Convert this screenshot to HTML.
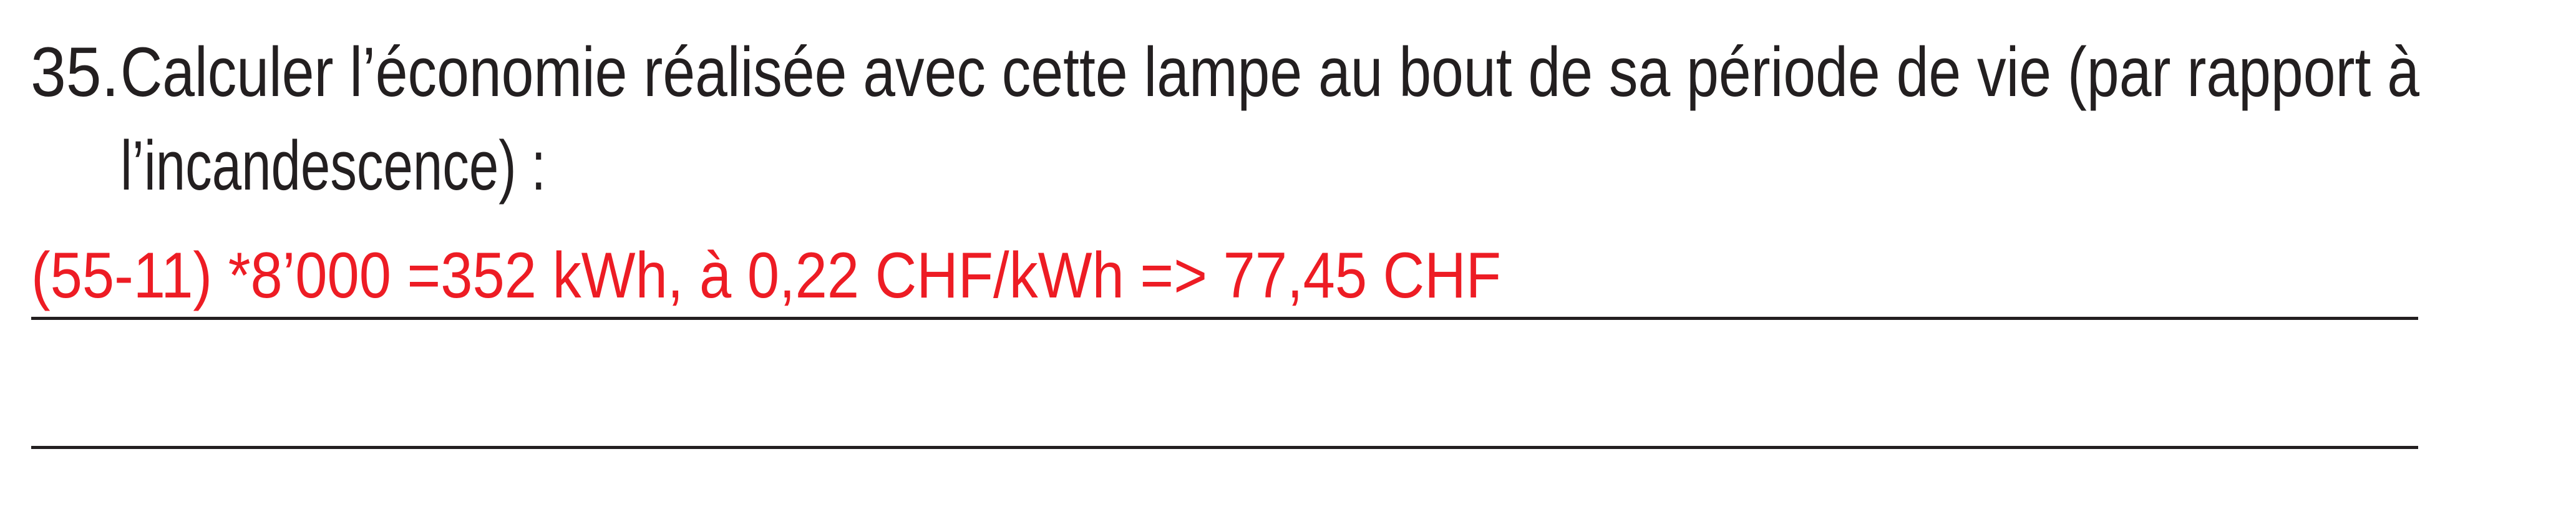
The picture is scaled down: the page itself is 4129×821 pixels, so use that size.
<!DOCTYPE html>
<html><head><meta charset="utf-8">
<style>
html,body{margin:0;padding:0;background:#fff;width:4129px;height:821px;overflow:hidden;position:relative}
.t{position:absolute;white-space:nowrap;font-family:"Liberation Sans Narrow","Liberation Sans",sans-serif;transform-origin:0 0;line-height:1}
.k{color:#231f20;font-size:112px}
.r{color:#ed1c24;font-size:104px}
.rule{position:absolute;left:50px;width:3826px;height:5px;background:#231f20}
</style></head><body>
<div class="t k" id="n" style="left:49px;top:60px">35.</div>
<div class="t k" id="l1" style="left:193px;top:60px">Calculer l’économie réalisée avec cette lampe au bout de sa période de vie (par rapport à</div>
<div class="t k" id="l2" style="left:193px;top:210px">l’incandescence) :</div>
<div class="t r" id="l3" style="left:50px;top:390px">(55-11) *8’000 =352 kWh, à 0,22 CHF/kWh =&gt; 77,45 CHF</div>
<div class="rule" style="top:508px"></div>
<div class="rule" style="top:715px"></div>
<script>
function fit(id,w){var e=document.getElementById(id);var cw=e.getBoundingClientRect().width;e.style.transform='scaleX('+(w/cw)+')';}
fit('n',142);fit('l1',3685);fit('l2',682);fit('l3',2356);
</script>
</body></html>
